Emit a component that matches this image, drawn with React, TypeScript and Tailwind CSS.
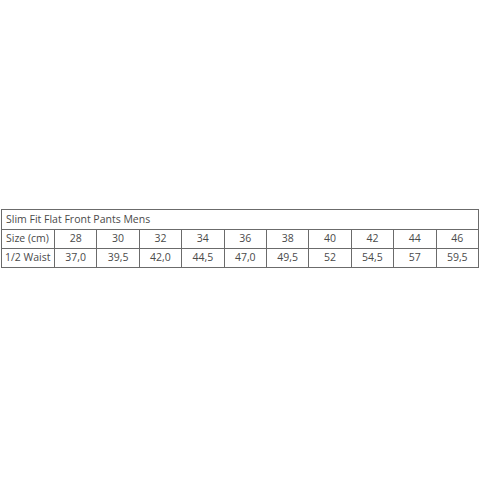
const sizes = ["28", "30", "32", "34", "36", "38", "40", "42", "44", "46"]
const waist = ["37,0", "39,5", "42,0", "44,5", "47,0", "49,5", "52", "54,5", "57", "59,5"]

const cell = "border border-[#6b6b6b] p-0 text-center font-normal"

export default function App() {
  return (
    <div className="flex h-[480px] w-[480px] items-center bg-white px-px">
      <table
        className="mb-[4px] w-[478px] table-fixed border-collapse whitespace-nowrap text-[10.5px] leading-none text-[#4a4a4a]"
        style={{ fontFamily: '"Open Sans", "Liberation Sans", sans-serif' }}
      >
        <colgroup>
          <col className="w-[53px]" />
          {sizes.map((s) => (
            <col key={s} />
          ))}
        </colgroup>
        <tbody>
          <tr className="h-[20px]">
            <td colSpan={11} className="border border-[#6b6b6b] pl-[4px] text-left">
              Slim Fit Flat Front Pants Mens
            </td>
          </tr>
          <tr className="h-[19px]">
            <td className="border border-[#6b6b6b] pl-[4px] text-left">Size (cm)</td>
            {sizes.map((s) => (
              <td key={s} className={cell}>
                {s}
              </td>
            ))}
          </tr>
          <tr className="h-[19px]">
            <td className="border border-[#6b6b6b] pl-[3px] text-left">1/2 Waist</td>
            {waist.map((w) => (
              <td key={w} className={cell}>
                {w}
              </td>
            ))}
          </tr>
        </tbody>
      </table>
    </div>
  )
}
